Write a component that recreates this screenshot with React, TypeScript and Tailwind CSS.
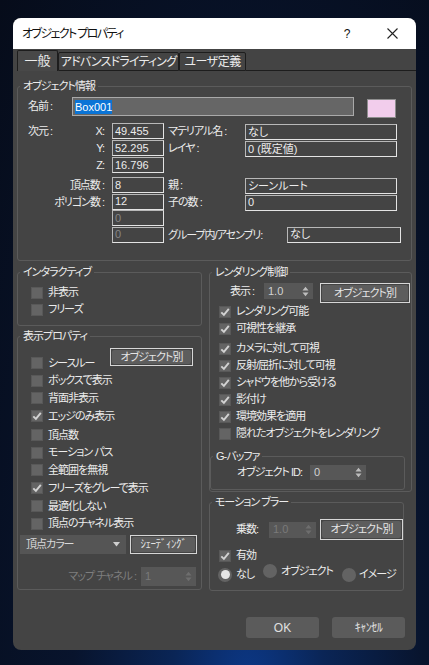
import type { ReactNode } from "react";

function Group({ title, className = "", children }: { title: string; className?: string; children: ReactNode }) {
  return (
    <fieldset className={`rounded-[3px] border border-[#5b5b5b] ${className}`}>
      <legend className="ml-[2px] px-[3px] leading-[14px]">{title}</legend>
      {children}
    </fieldset>
  );
}

function Check({ on, label, h = "h-[17px]", className = "" }: { on?: boolean; label: string; h?: string; className?: string }) {
  return (
    <div className={`flex items-center ${h} ${className}`}>
      <span className="flex h-[12px] w-[12px] shrink-0 items-center justify-center border border-[#585858] bg-[#646464]">
        {on && (
          <svg width="10" height="10" viewBox="0 0 10 10">
            <path d="M1.3 5.3 L3.9 7.9 L8.8 1.8" fill="none" stroke="#d2d2d2" strokeWidth="1.9" />
          </svg>
        )}
      </span>
      <span className="ml-[5px]">{label}</span>
    </div>
  );
}

function Field({ v, w, h = "h-[16px]", dim, className = "" }: { v?: string; w: string; h?: string; dim?: boolean; className?: string }) {
  return (
    <div
      className={`flex shrink-0 items-center border border-[#b8b8b8] border-b-[#e4e4e4] border-r-[#e4e4e4] pl-[2px] leading-none tracking-normal ${w} ${h} ${
        dim ? "text-[#868686]" : "text-[#ececec]"
      } ${className}`}
    >
      {v}
    </div>
  );
}

function Spin({ v, w, h, dim }: { v: string; w: string; h: string; dim?: boolean }) {
  return (
    <div className={`flex shrink-0 items-center justify-between bg-[#575757] pl-[4px] pr-[4px] tracking-normal ${w} ${h} ${dim ? "text-[#7a7a7a]" : "text-[#d2d2d2]"}`}>
      <span>{v}</span>
      <svg width="7" height="11" viewBox="0 0 7 11">
        <path d="M3.5 0.8 L6.5 4.4 H0.5Z M3.5 10.2 L6.5 6.6 H0.5Z" fill={dim ? "#6e6e6e" : "#bdbdbd"} />
      </svg>
    </div>
  );
}

function Btn({ label, w, h, className = "" }: { label: string; w: string; h: string; className?: string }) {
  return (
    <div className={`shrink-0 border border-[#d6d6d6] p-[1px] ${w} ${h} ${className}`}>
      <div className="flex h-full w-full items-center justify-center rounded-[2px] bg-[#5d5d5d] text-[#e4e4e4]">{label}</div>
    </div>
  );
}

function Radio({ on }: { on?: boolean }) {
  return (
    <span className="flex h-[14px] w-[14px] shrink-0 items-center justify-center rounded-full bg-[#636363]">
      {on && <span className="h-[9px] w-[9px] rounded-full bg-[#e6e6e6]" />}
    </span>
  );
}

function InfoRow({
  left = "",
  axis = "",
  v,
  dim,
  rl,
  rv,
  h = "h-[17px]",
  className = "",
}: {
  left?: string;
  axis?: string;
  v: string;
  dim?: boolean;
  rl?: string;
  rv?: string;
  h?: string;
  className?: string;
}) {
  return (
    <div className={`flex items-start ${h} ${className}`}>
      <div className="flex w-[94px] justify-between leading-[16px]">
        <span className="pl-[10px]">{left}</span>
        <span className="pr-[8px]">{axis}</span>
      </div>
      <Field v={v} w="w-[52px]" dim={dim} />
      {rl && <span className="w-[81px] pl-[4px] leading-[16px]">{rl}</span>}
      {rv !== undefined && <Field v={rv} w="w-[152px]" className="mt-[1px]" />}
    </div>
  );
}

export default function App() {
  return (
    <div className="h-[665px] w-[429px] overflow-hidden whitespace-nowrap bg-[radial-gradient(ellipse_at_58%_108%,#0c3a8c_0%,#0a2556_22%,#08142d_50%,#060c1a_100%)] pl-[13px] pt-[18px] font-['Liberation_Sans','Noto_Sans_CJK_JP',sans-serif] text-[11px] tracking-[-1px] text-[#ececec] [font-feature-settings:'palt'_1]">
      <div className="flex h-[632px] w-[403px] flex-col overflow-hidden rounded-[8px] bg-[#444444]">
        {/* title bar */}
        <div className="flex h-[31px] shrink-0 items-center bg-white pl-[9px] text-[12px] text-[#111]">
          <span className="tracking-[-1.6px]">オブジェクト プロパティ</span>
          <span className="ml-auto w-[14px] text-center tracking-normal">?</span>
          <svg className="ml-[33px] mr-[18px]" width="11" height="11" viewBox="0 0 11 11">
            <path d="M0.5 0.5L10.5 10.5M10.5 0.5L0.5 10.5" stroke="#222" strokeWidth="1.1" />
          </svg>
        </div>

        {/* tabs */}
        <div className="flex h-[22px] shrink-0 items-end pl-[4px] text-[12px]">
          <div className="flex h-[21px] w-[41px] items-center justify-center rounded-t-[2px] border border-b-0 border-[#1d1d1d] bg-[#484848] text-[13px] tracking-normal">
            一般
          </div>
          <div className="flex h-[19px] w-[121px] items-center justify-center overflow-hidden rounded-t-[2px] border border-[#1d1d1d] tracking-[-0.8px]">
            アドバンスドライティング
          </div>
          <div className="flex h-[19px] w-[67px] items-center justify-center rounded-t-[2px] border border-[#1d1d1d] tracking-[-0.5px]">
            ユーザ定義
          </div>
          <div className="h-px flex-1 bg-[#1d1d1d]" />
        </div>

        <div className="flex flex-1 flex-col px-[4px]">
          {/* object info */}
          <Group title="オブジェクト情報" className="mt-[8px] pb-[17px]">
            <div className="mt-[4px] flex h-[21px] items-start">
              <span className="w-[54px] pl-[10px] leading-[19px]">名前 :</span>
              <div className="flex h-[19px] w-[282px] items-center border border-[#a9a9a9] bg-[#666666] pl-[2px] tracking-normal">
                <span className="bg-[#0a74d6] leading-[14px] text-white">Box001</span>
              </div>
              <div className="ml-[13px] mt-[2px] h-[19px] w-[29px] border border-[#8e8e8e] bg-[#f2cdec]" />
            </div>
            <InfoRow className="mt-[5px]" left="次元 :" axis="X:" v="49.455" rl="マテリアル名 :" rv="なし" />
            <InfoRow axis="Y:" v="52.295" rl="レイヤ :" rv="0 (既定値)" />
            <InfoRow axis="Z:" v="16.796" />
            <InfoRow className="mt-[3px]" h="h-[16.5px]" axis="頂点数 :" v="8" rl="親 :" rv="シーンルート" />
            <InfoRow h="h-[16.5px]" axis="ポリゴン数 :" v="12" rl="子の数 :" rv="0" />
            <InfoRow h="h-[16.5px]" v="0" dim />
            <div className="flex h-[16.5px] items-start">
              <div className="w-[94px]" />
              <Field v="0" w="w-[52px]" dim />
              <span className="w-[123px] pl-[4px] leading-[16px]">グループ内/アセンブリ:</span>
              <Field v="なし" w="w-[114px]" />
            </div>
          </Group>

          <div className="mt-[4px] flex gap-[7px]">
            {/* left column */}
            <div className="flex w-[185px] flex-col">
              <Group title="インタラクティブ" className="pb-[7px]">
                <div className="mt-[5px] pl-[13px]">
                  <Check label="非表示" />
                  <Check label="フリーズ" />
                </div>
              </Group>

              <Group title="表示プロパティ" className="mt-[3px] pb-[3px]">
                <div className="mt-[5px] flex items-start pl-[13px]">
                  <Check label="シースルー" h="h-[17.75px]" className="mt-[6px]" />
                  <Btn label="オブジェクト別" w="w-[83px]" h="h-[18px]" className="ml-auto mr-[8px]" />
                </div>
                <div className="pl-[13px]">
                  <Check label="ボックスで表示" h="h-[17.75px]" />
                  <Check label="背面非表示" h="h-[17.75px]" />
                  <Check label="エッジのみ表示" on h="h-[17.75px]" />
                  <Check label="頂点数" h="h-[17.75px]" className="mt-[1px]" />
                  <Check label="モーション パス" h="h-[17.75px]" />
                  <Check label="全範囲を無視" h="h-[17.75px]" />
                  <Check label="フリーズをグレーで表示" on h="h-[17.75px]" />
                  <Check label="最適化しない" h="h-[17.75px]" />
                  <Check label="頂点のチャネル表示" h="h-[17.75px]" />
                </div>
                <div className="mt-[2.5px] flex items-center pl-[2px]">
                  <div className="flex h-[19px] w-[106px] items-center justify-between bg-[#555555] pl-[6px] pr-[6px] text-[#d8d8d8]">
                    <span>頂点カラー</span>
                    <svg width="7" height="5" viewBox="0 0 7 5">
                      <path d="M0 0 H7 L3.5 4.5Z" fill="#cfcfcf" />
                    </svg>
                  </div>
                  <Btn label="ｼｪｰﾃﾞｨﾝｸﾞ" w="w-[67px]" h="h-[19px]" className="ml-[4px] tracking-[-0.5px]" />
                </div>
                <div className="mt-[13px] flex items-center justify-end pr-[5px] text-[#7e7e7e]">
                  <span className="mr-[5px]">マップ チャネル :</span>
                  <Spin v="1" w="w-[55px]" h="h-[19px]" dim />
                </div>
              </Group>
            </div>

            {/* right column */}
            <div className="flex w-[203px] flex-col">
              <Group title="レンダリング制御" className="pb-[1px]">
                <div className="mt-[4px] flex h-[20px] items-start">
                  <div className="flex h-[16px] items-center">
                    <span className="w-[54px] pl-[20px]">表示 :</span>
                    <Spin v="1.0" w="w-[49px]" h="h-[16px]" />
                  </div>
                  <Btn label="オブジェクト別" w="w-[90px]" h="h-[20px]" className="ml-[7px]" />
                </div>
                <div className="pl-[9px]">
                  <Check label="レンダリング可能" on />
                  <Check label="可視性を継承" on />
                  <Check label="カメラに対して可視" on className="mt-[3px]" />
                  <Check label="反射/屈折に対して可視" on />
                  <Check label="シャドウを他から受ける" on />
                  <Check label="影付け" on />
                  <Check label="環境効果を適用" on />
                  <Check label="隠れたオブジェクトをレンダリング" />
                </div>
                <Group title="G-バッファ" className="mr-[6px] mt-[7px] pb-[9px]">
                  <div className="mt-[2px] flex h-[15px] items-center">
                    <span className="w-[99px] pl-[26px]">オブジェクト ID:</span>
                    <Spin v="0" w="w-[56px]" h="h-[15px]" />
                  </div>
                </Group>
              </Group>

              <Group title="モーション ブラー" className="mr-[8px] mt-[3px] pb-[7px]">
                <div className="mt-[10px] flex h-[21px] items-center">
                  <span className="w-[59px] pl-[26px]">乗数:</span>
                  <Spin v="1.0" w="w-[47px]" h="h-[16px]" dim />
                  <Btn label="オブジェクト別" w="w-[83px]" h="h-[21px]" className="ml-[4px]" />
                </div>
                <Check label="有効" on className="mt-[7px] pl-[9px]" />
                <div className="mt-[2px] flex h-[17px] items-center pl-[8px]">
                  <div className="flex w-[45px] items-center">
                    <Radio on />
                    <span className="ml-[4px]">なし</span>
                  </div>
                  <div className="mb-[7px] flex w-[79px] items-center">
                    <Radio />
                    <span className="ml-[4px]">オブジェクト</span>
                  </div>
                  <div className="flex items-center">
                    <Radio />
                    <span className="ml-[3px]">イメージ</span>
                  </div>
                </div>
              </Group>
            </div>
          </div>

          {/* footer buttons */}
          <div className="mt-[26px] flex justify-end gap-[13px] pr-[7px]">
            <div className="flex h-[21px] w-[73px] items-center justify-center rounded-[3px] bg-[#5b5b5b] text-[12px] tracking-normal text-[#e0e0e0]">OK</div>
            <div className="flex h-[21px] w-[73px] items-center justify-center rounded-[3px] bg-[#5b5b5b] text-[12px] tracking-[-0.5px] text-[#e0e0e0]">ｷｬﾝｾﾙ</div>
          </div>
        </div>
      </div>
    </div>
  );
}
